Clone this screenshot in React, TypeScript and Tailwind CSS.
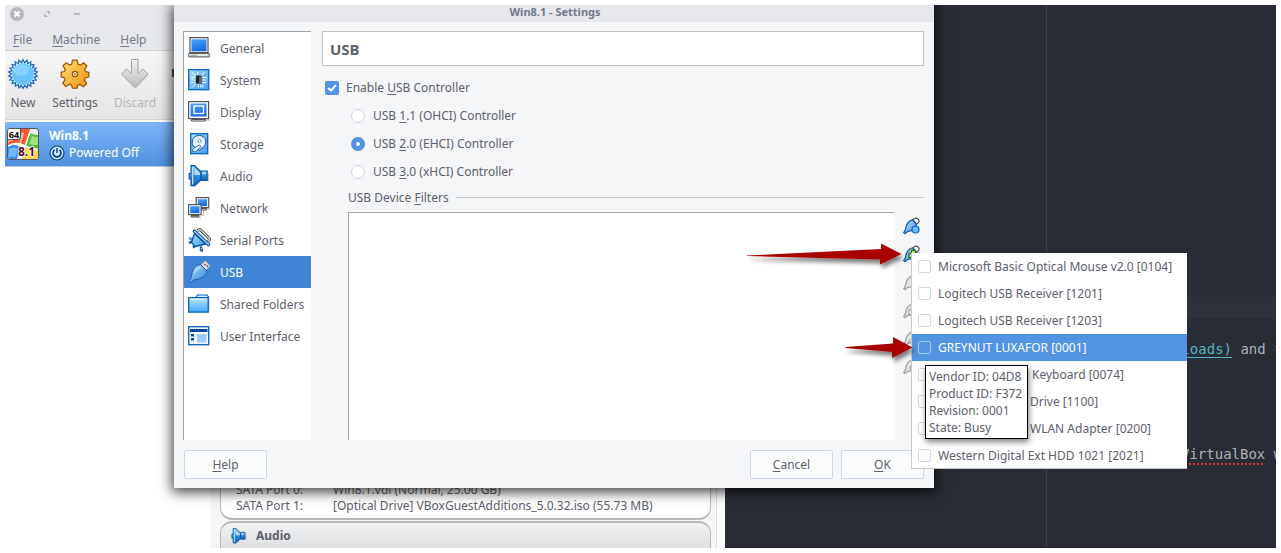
import type { ReactNode } from 'react';

const GENERAL = (
  <svg width="22" height="22" viewBox="0 0 22 22">
    <path d="M2 18h20v3H2z" fill="#bbb" opacity=".6" />
    <path d="M2 0.700h18v15H2z" fill="#fff" stroke="#555" strokeWidth="1.2" />
    <rect x="3.500" y="2.300" width="15" height="12" fill="url(#screen)" />
    <path d="M0.6 16.500h20.500v3.300H0.600z" fill="#e6e6e2" stroke="#666" />
    <path d="M3 18.200h6" stroke="#999" />
  </svg>
);
const SYSTEM = (
  <svg width="22" height="22" viewBox="0 0 22 22">
    <rect x="0.7" y="0.7" width="20" height="20" fill="url(#skyLight)" stroke="#0b62bd" strokeWidth="1.3" />
    <path d="M3 8.500h4M3 11h4M3 13.500h4M14.500 8.500h4M14.500 11h4M14.500 13.500h4M10.500 15.500v3M12.700 15.500v3M14.900 15.500v3M4 3.500l4 3.500M16.500 3l-3.500 4M9.500 3v3M4 18.500l4-4" stroke="#fff" strokeWidth="1" />
    <rect x="8" y="6.500" width="5.500" height="8" fill="#222" />
    <path d="M11 7.500h2.500v7H11z" fill="#666" />
  </svg>
);
const DISPLAY = (
  <svg width="22" height="22" viewBox="0 0 22 22">
    <path d="M2 18h20v2H2z" fill="#bbb" opacity=".6" />
    <rect x="0.6" y="0.600" width="20" height="17" fill="#fff" stroke="#555" strokeWidth="1.2" />
    <rect x="2.500" y="2.500" width="16" height="13" fill="url(#screen)" />
    <rect x="6" y="5" width="9.500" height="7.500" fill="none" stroke="#fff" strokeWidth="1.4" />
    <path d="M3.500 18.500h14v1.500h-14z" fill="#fff" stroke="#555" />
  </svg>
);
const STORAGE = (
  <svg width="22" height="22" viewBox="0 0 22 22">
    <rect x="2.700" y="0.700" width="17" height="20" fill="url(#skyLight)" stroke="#0b62bd" strokeWidth="1.3" />
    <path d="M5 13C3.500 10 4 5.500 7.500 3.500 11 1.500 15 2.500 17 5.500c1.800 3 .5 7-2 9L11.500 17z" fill="#e4f3ff" stroke="#0b4f9f" />
    <path d="M4.800 18.500c-.5-2 1-3 2.500-4l4-2.500 1.700 1.500-3 3c-1.500 1.500-3 3-5.200 2z" fill="#fff" stroke="#0b4f9f" strokeWidth=".9" />
    <circle cx="11.500" cy="8" r="1.500" fill="#fff" stroke="#2277c9" strokeWidth=".8" />
  </svg>
);
const AUDIO = (
  <svg width="22" height="22" viewBox="0 0 22 22">
    <path d="M4 21.500h3L13 16h8V8h-1v7h-7z" fill="#888" opacity=".5" />
    <path d="M1.200 8.500H3V.700H6.500L13.200 7v7.500L6.500 20.600H3V14H1.200z" fill="url(#speaker)" stroke="#0b55a8" strokeWidth="1.200" />
    <path d="M13.200 6h6v9.300h-6z" fill="url(#speaker)" stroke="#0b55a8" strokeWidth="1.200" />
    <path d="M4 2h1.300v17.500H4z" fill="#bfe2ff" />
    <path d="M6.500 3.200L12 8v2H6.500zM14 7.500h4v1.500h-4z" fill="#cfe9fd" opacity=".8" />
  </svg>
);
const NETWORK = (
  <svg width="22" height="22" viewBox="0 0 22 22">
    <path d="M9 12h13M3 20.500h10M14 18.500h1.500V9" stroke="#bbb" fill="none" />
    <rect x="8.200" y="0.600" width="12.500" height="10" fill="#fff" stroke="#555" strokeWidth="1.200" />
    <rect x="9.800" y="2.200" width="9.300" height="7" fill="url(#screen)" />
    <path d="M11 11.500h7.500v1.500H11z" fill="#fff" stroke="#555" />
    <rect x="0.600" y="7.600" width="12.500" height="10" fill="#fff" stroke="#555" strokeWidth="1.200" />
    <rect x="2.200" y="9.200" width="9.300" height="7" fill="url(#screen)" />
    <path d="M3 18.500h8v1.200H3z" fill="#fff" stroke="#555" />
  </svg>
);
const SERIAL = (
  <svg width="24" height="24" viewBox="0 0 24 24">
    <path d="M9.500 2.500L12 1.200l9.500 9.500-.8 3" fill="none" stroke="#444" strokeWidth="3" strokeLinejoin="round" />
    <path d="M10 2.500L12 1.200l9.500 9.500-.8 3" fill="none" stroke="#f4f4f4" strokeWidth="1.200" strokeLinejoin="round" />
    <path d="M1 10l4 1.500M1 15l4-2M13 18.500v3.500l2 .500M7 18l-2 1.500" stroke="#0b4f9f" strokeWidth="2.400" />
    <path d="M6.500 5.500L17.500 16 7 18.500 3.500 14.500z" fill="url(#skyLight)" stroke="#0b4f9f" strokeWidth="1.300" strokeLinejoin="round" />
    <path d="M6.500 3.200L20.500 16.500" stroke="#0b4f9f" strokeWidth="3.600" strokeLinecap="round" />
    <path d="M6.500 3.200L20.500 16.500" stroke="#a8d9ff" strokeWidth="1.400" strokeLinecap="round" />
    <path d="M1.200 10l2.500 1M13.200 20v2" stroke="#a8d9ff" strokeWidth=".9" />
  </svg>
);
const USB = (
  <svg width="24" height="24" viewBox="0 0 24 24">
    <path d="M12.500 5L17 .800Q17.500.500 18 1L22 5.500Q22.500 6 22 6.500L18 10.500z" fill="#dcdfe3" stroke="#7d858e" strokeWidth="1" />
    <path d="M16.300 4l1.300 1.300M18.800 5.500l1.300 1.300" stroke="#555" strokeWidth="1.500" />
    <path d="M12.500 4.500L18.700 10.800C19 15 15 18.500 8 19.500L5.500 20 2 22.700.800 21.500 3 18 3.700 15C4.500 9 8 4.800 12.500 4.500z" fill="url(#plugBody)" stroke="#1a62ad" strokeWidth="1" />
    <path d="M5.200 15C6 10 9 6.500 12 6l2 2C11 9 8 11.500 5.200 15z" fill="#c3e3fb" opacity=".6" />
  </svg>
);
const FOLDER = (
  <svg width="22" height="20" viewBox="0 0 22 20">
    <path d="M7 4.500L9.500 1h9.500l1.500 2v14" fill="#d4efff" stroke="#0b62bd" strokeWidth="1.200" />
    <path d="M.700 3.700h19.500v14.500H.700z" fill="url(#folder)" stroke="#0b62bd" strokeWidth="1.300" />
    <path d="M2 5.200h17" stroke="#e7f8ff" />
  </svg>
);
const INTERFACE = (
  <svg width="22" height="20" viewBox="0 0 22 20">
    <rect x=".700" y=".700" width="20" height="18" fill="#f5faff" stroke="#1467bd" strokeWidth="1.400" />
    <path d="M2 3h17.500v3H2z" fill="#0a489e" />
    <path d="M3 8h3v2.500H3zM3 12h3v2.500H3z" fill="#0a489e" />
    <path d="M9 8h9.500v8.500H9z" fill="#9ecbff" />
  </svg>
);

function Gradients() {
  return (
    <svg width="0" height="0" className="absolute" aria-hidden="true">
      <defs>
        <linearGradient id="screen" x1="0" y1="0" x2="0.3" y2="1"><stop stopColor="#4aa4ff" /><stop offset="1" stopColor="#1b6de0" /></linearGradient>
        <linearGradient id="skyLight" x1="0" y1="0" x2="1" y2="1"><stop stopColor="#a6dcff" /><stop offset="1" stopColor="#3c9cf0" /></linearGradient>
        <linearGradient id="speaker" x1="0" y1="0" x2="0" y2="1"><stop stopColor="#9ad4ff" /><stop offset=".55" stopColor="#2a86dc" /><stop offset="1" stopColor="#1760b8" /></linearGradient>
        <linearGradient id="plug" x1="0" y1="0" x2="1" y2="1"><stop stopColor="#cfe9fd" /><stop offset="1" stopColor="#3288d8" /></linearGradient>
        <linearGradient id="plugBody" x1="0" y1="0" x2="1" y2="1"><stop offset=".1" stopColor="#a5d2f7" /><stop offset=".9" stopColor="#3b8fdd" /></linearGradient>
        <linearGradient id="folder" x1="0" y1="0" x2="0" y2="1"><stop stopColor="#b8e5ff" /><stop offset="1" stopColor="#45aaf8" /></linearGradient>
        <linearGradient id="gold" x1="0" y1="0" x2="1" y2="1"><stop stopColor="#ffe071" /><stop offset="1" stopColor="#f29111" /></linearGradient>
        <linearGradient id="grey" x1="0" y1="0" x2="0" y2="1"><stop stopColor="#f2f2f2" /><stop offset="1" stopColor="#bdbdbd" /></linearGradient>
        <filter id="arrowShadow" x="-10%" y="-40%" width="125%" height="200%"><feDropShadow dx="2" dy="4" stdDeviation="2" floodOpacity=".5" /></filter>
      </defs>
    </svg>
  );
}

function points(count: number, outer: number, inner: number, c: number) {
  return Array.from({ length: count * 2 }, (_, i) => {
    const a = (i * Math.PI) / count - Math.PI / 2;
    const r = i % 2 ? inner : outer;
    return `${(c + r * Math.cos(a)).toFixed(2)},${(c + r * Math.sin(a)).toFixed(2)}`;
  }).join(' ');
}

const NEW_ICON = (
  <svg width="32" height="32" viewBox="0 0 32 32">
    <polygon points={points(22, 14.5, 11.4, 17)} fill="#999" opacity=".4" />
    <polygon points={points(22, 14.5, 11.4, 16)} fill="#d8f2ff" stroke="#0f60bb" strokeWidth="1.1" />
    <circle cx="16" cy="16" r="10.800" fill="#68c3ff" />
    <ellipse cx="14" cy="12" rx="8" ry="6" fill="#8fd4ff" opacity=".8" />
  </svg>
);
const GEAR_ICON = (
  <svg width="32" height="32" viewBox="0 0 32 32">
    <g transform="translate(.8 .3) scale(.95)">
      <path
        d="M13.300 2h5l.8 4.200 2.400 1 3.600-2.500 3.400 3.400-2.400 3.600 1 2.400 3.400.7v4.900l-3.700.8-1 2.400 2.500 3.600-3.500 3.400-3.500-2.400-2.400 1-.7 2.900h-5l-.8-3.200-2.400-1-3.600 2.500-3.300-3.500 2.400-3.500-1-2.400-3-.7v-5l3.300-.7 1-2.400L3.300 8.100l3.500-3.400 3.500 2.400 2.300-1z"
        fill="url(#gold)" stroke="#965309" strokeWidth="1.300" strokeLinejoin="round"
      />
      <circle cx="16" cy="16.500" r="2.800" fill="#fff3d0" stroke="#965309" strokeWidth="1.300" />
      <circle cx="16" cy="16.500" r="1" fill="#b87822" />
    </g>
  </svg>
);
const DISCARD_ICON = (
  <svg width="32" height="32" viewBox="0 0 32 32">
    <path d="M12.500 2h6v15l5-5 5 4.500L16 30 3 16.500 8 12l4.500 5z" fill="#999" opacity=".35" transform="translate(.8 1)" />
    <path d="M12.500 1.500h6.500v14l5-4.500L29 16 15.700 29.500 2.500 16 7.500 11l5 4.500z" fill="url(#grey)" stroke="#a4a4a4" />
    <path d="M13.500 2.500h4.500" stroke="#fff" />
  </svg>
);

function WinTile() {
  return (
    <div className="relative h-8 w-8 shrink-0 overflow-hidden rounded-[3px] border border-[#555] bg-[#e8eef0]">
      <svg width="30" height="30" viewBox="0 0 30 30" className="block">
        <path d="M0 9c5-2 9-3 13-2l2 8C10 14 5 14 0 17z" fill="#f9a98a" />
        <path d="M13 0h9l-5 17c-5-3-11-3-17 0v-3c4-3 8-4 12-4z" fill="#ef5a30" />
        <path d="M14 3l2 1-3 11h-2z" fill="#fff" opacity=".6" />
        <path d="M22 4c3 1.500 5 2 8 2v14c-5 0-10-1-12-3z" fill="#55b93c" />
        <path d="M24 7c2 1 4 1 6 1v8c-3 0-6 0-9-1z" fill="#a3e07d" />
        <path d="M0 18c5-3 9-2 12 0l-3 12H0z" fill="#2f8ff0" />
        <path d="M1 20c3-2 6-2 9 0L7 29c-2-2-5-2-7 0z" fill="#8cc8ff" opacity=".7" />
        <path d="M17 18c4 2 8 3 13 3v9H14z" fill="#ffd54c" />
        <path d="M0 17c6-4 11-3 16-1 5 3 9 4 14 4M22 3l-5 14-4 13" fill="none" stroke="#fff" strokeWidth="1.200" />
      </svg>
      <span className="absolute left-0 top-0 flex h-[11px] w-[13px] items-center justify-center rounded-br-sm border-b border-r border-[#555] bg-white text-[9px] font-bold leading-none text-black">64</span>
      <span className="absolute bottom-[1px] right-[3px] text-[12px] font-bold leading-[13px] text-[#5c0712] [text-shadow:1px_0_#fff,-1px_0_#fff,0_1px_#fff,0_-1px_#fff]">8.1</span>
    </div>
  );
}

function FilterIcon({ badge, muted }: { badge: string; muted?: boolean }) {
  const stroke = muted ? '#999' : '#0c55a8';
  return (
    <svg width="18" height="18" viewBox="0 0 18 18" className="block">
      <path d="M10 3Q11.500 1 13 1Q16 1.500 16.200 4.500L13.500 7.500z" fill="#f8f8f8" stroke={muted ? '#aaa' : '#444'} strokeWidth="1.100" />
      <path d="M9.500 2.800L13.500 7.500C13 12 9 14 5 14.300L2 16.500.700 15.800 2.500 12.500C3 8 5.500 4 9.500 2.800z" fill={muted ? '#e4e4e4' : 'url(#plug)'} stroke={stroke} strokeWidth="1.200" />
      {badge === 'dot' && <circle cx="12.500" cy="12.500" r="3.500" fill="#6db8f8" stroke="#0c62c2" strokeWidth="1.200" />}
      {badge === 'plus' && <path d="M8.500 5.500h4v3h3.500v4h-3.500v3h-4v-3H6v-4h2.500z" fill="#d8f9b5" stroke="#2f7a0b" strokeWidth="1.300" />}
      {badge === 'minus' && <rect x="6" y="8.500" width="8" height="5" fill="#eee" stroke="#999" />}
      {badge === 'up' && <path d="M5 13l6-6 6 6z" fill="#eee" stroke="#999" />}
      {badge === 'down' && <circle cx="10.500" cy="11" r="3.500" fill="#eee" stroke="#999" />}
    </svg>
  );
}

function U({ children }: { children: ReactNode }) {
  return <span className="underline decoration-1 underline-offset-[2px]">{children}</span>;
}

function ToolButton({ icon, label, width, muted }: { icon: ReactNode; label: string; width: string; muted?: boolean }) {
  return (
    <div className={`flex flex-col items-center ${width}`}>
      {icon}
      <span className={`mt-[3px] leading-[20px] ${muted ? 'text-[#b4b7bc]' : 'text-[#5c616c]'}`}>{label}</span>
    </div>
  );
}

function ManagerWindow() {
  return (
    <div className="absolute left-0 top-0 flex h-[543px] w-[720px] flex-col bg-white">
      <div className="h-[45px] bg-[#e7e8eb] text-[#70788c]">
        <div className="flex h-[18px] items-center pl-[5px]">
          <svg width="90" height="18" viewBox="0 0 90 18">
            <circle cx="7" cy="9" r="7" fill="#b6b8be" />
            <path d="M4.500 6.500l5 5m0-5l-5 5" stroke="#fff" strokeWidth="2" />
            <path d="M36 6h4v4zM34 8v4h4z" fill="#b6b8be" />
            <path d="M64 8h6v2h-6z" fill="#b6b8be" />
          </svg>
        </div>
        <div className="flex h-[33px] gap-5 pl-[8px] leading-[34px]">
          <span><U>F</U>ile</span>
          <span><U>M</U>achine</span>
          <span><U>H</U>elp</span>
        </div>
      </div>
      <div className="flex h-[70px] border-b border-t border-[#d2d3d6] bg-linear-to-b from-[#f6f6f7] to-[#e5e5e5] pt-[7px]">
        <ToolButton icon={NEW_ICON} label="New" width="w-[36px]" />
        <ToolButton icon={GEAR_ICON} label="Settings" width="w-[68px]" />
        <ToolButton icon={DISCARD_ICON} label="Discard" width="w-[52px]" muted />
        <div className="ml-[11px] mt-[11px] h-2 w-2 bg-[#396229]" />
      </div>
      <div className="flex min-h-0 flex-1">
        <div className="w-[205px] pt-[2px]">
          <div className="flex h-[45px] items-center gap-[10px] border-b border-[#b9cde5] bg-linear-to-b from-[#7db6fb] to-[#4f90dd] pl-[2px] text-white">
            <WinTile />
            <div>
              <div className="font-bold leading-[17px]">Win8.1</div>
              <div className="flex items-center gap-1 leading-[17px]">
                <svg width="16" height="16" viewBox="0 0 16 16">
                  <circle cx="8" cy="8" r="7" fill="#cbe8ff" stroke="#083f86" strokeWidth="1.200" />
                  <path d="M5.500 4.800a4 4 0 1 0 5 0" fill="none" stroke="#09408c" strokeWidth="1.700" />
                  <path d="M8 3v5" stroke="#09408c" strokeWidth="1.500" />
                </svg>
                Powered Off
              </div>
            </div>
          </div>
        </div>
        <div className="flex flex-1 flex-col justify-end bg-[#f5f6f7]">
          <div className="flex h-[200px] bg-[#f5f6f7]">
            <div className="flex w-[507px] flex-col gap-[1px] border-r border-[#dadbdd] pl-[10px]">
              <div className="flex h-[172px] w-[491px] flex-col justify-end rounded-[12px] border border-b-2 border-[#b9b9b9] bg-white pb-[4px] pl-[15px] leading-[16px]">
                <div className="flex"><span className="w-[97px]">SATA Port 0:</span><span>Win8.1.vdi (Normal, 25.00 GB)</span></div>
                <div className="flex"><span className="w-[97px]">SATA Port 1:</span><span>[Optical Drive] VBoxGuestAdditions_5.0.32.iso (55.73 MB)</span></div>
              </div>
              <div className="flex h-[27px] w-[491px] items-center gap-[9px] rounded-t-[12px] border border-b-0 border-t-2 border-[#b9b9b9] bg-linear-to-b from-[#f1f2f3] to-[#dedfe0] pl-[10px] font-bold">
                <span className="h-4 w-4 [&>svg]:h-4 [&>svg]:w-4">{AUDIO}</span>
                <span>Audio</span>
              </div>
            </div>
            <div className="flex-1 bg-[#fbfbfc]" />
          </div>
        </div>
      </div>
    </div>
  );
}

function Editor() {
  return (
    <div className="absolute left-[720px] top-0 flex h-[543px] w-[551px] overflow-hidden border-b border-[#2e1f38] bg-[#282c34] font-['DejaVu_Sans_Mono',monospace] text-[14px] leading-[21px] text-[#abb2bf]">
      <div className="w-full whitespace-pre pt-[292px]">
        <div className="h-[21px] bg-[#2c313a]" />
        <div className="h-[21px]" />
        <div className="h-[21px] pl-[448px]"><span className="text-[#56b6c2] underline underline-offset-[3px]">nloads)</span> and t</div>
        <div className="h-[84px]" />
        <div className="h-[21px] pl-[456px]"><span className="underline decoration-[#e0353b] decoration-dotted decoration-2 underline-offset-[4px]">VirtualBox</span> w</div>
      </div>
      <div className="absolute left-[321px] top-0 h-full w-px bg-[#3a3f48]" />
    </div>
  );
}

const CATEGORIES: { label: string; icon: ReactNode; active?: boolean }[] = [
  { label: 'General', icon: GENERAL },
  { label: 'System', icon: SYSTEM },
  { label: 'Display', icon: DISPLAY },
  { label: 'Storage', icon: STORAGE },
  { label: 'Audio', icon: AUDIO },
  { label: 'Network', icon: NETWORK },
  { label: 'Serial Ports', icon: SERIAL },
  { label: 'USB', icon: USB, active: true },
  { label: 'Shared Folders', icon: FOLDER },
  { label: 'User Interface', icon: INTERFACE },
];

function Radio({ checked, children }: { checked?: boolean; children: ReactNode }) {
  return (
    <div className="flex h-7 items-center gap-2">
      <span className={`flex h-[14px] w-[14px] items-center justify-center rounded-full ${checked ? 'bg-[#5294e2]' : 'border border-[#cfd6e6] bg-white'}`}>
        {checked && <span className="h-1 w-1 rounded-full bg-white" />}
      </span>
      <span>{children}</span>
    </div>
  );
}

function Button({ children }: { children: ReactNode }) {
  return <div className="flex h-[29px] w-[83px] items-center justify-center rounded-[2px] border border-[#cfd6e6] bg-[#fbfdfd]">{children}</div>;
}

function SettingsDialog() {
  return (
    <div className="absolute left-[169px] top-0 flex h-[483px] w-[760px] flex-col bg-[#f5f6f8] shadow-[0_2px_12px_2px_rgba(0,0,0,0.75)]">
      <div className="h-[17px] bg-[#e7e8eb] pl-[2px] text-center text-[11px] font-bold leading-[14px] text-[#70788c]">Win8.1 - Settings</div>
      <div className="flex h-[418px] pl-[9px] pt-[9px]">
        <div className="w-[128px] border-l border-t border-[#a0a5ac] bg-white">
          {CATEGORIES.map((c) => (
            <div key={c.label} className={`flex h-8 items-center pl-1 ${c.active ? 'bg-[#4084d6] text-white' : ''}`}>
              <span className="flex w-8 items-center">{c.icon}</span>
              <span className="pt-[2px]">{c.label}</span>
            </div>
          ))}
        </div>
        <div className="ml-[11px] flex w-[602px] flex-col">
          <div className="flex h-[35px] items-center border border-[#c0c1c3] bg-white pl-[7px] pt-[2px] text-[15px] font-bold">USB</div>
          <div className="mt-[8px] flex h-7 items-center gap-[7px] pl-[3px]">
            <span className="flex h-[14px] w-[14px] items-center justify-center rounded-[2px] bg-[#5294e2]">
              <svg width="10" height="10" viewBox="0 0 10 10"><path d="M1 5l3 2.500L9 2" fill="none" stroke="#fff" strokeWidth="2" /></svg>
            </span>
            <span>Enable <U>U</U>SB Controller</span>
          </div>
          <div className="pl-[29px]">
            <Radio>USB <U>1</U>.1 (OHCI) Controller</Radio>
            <Radio checked>USB <U>2</U>.0 (EHCI) Controller</Radio>
            <Radio>USB <U>3</U>.0 (xHCI) Controller</Radio>
          </div>
          <div className="flex h-[26px] items-center gap-[7px] pl-[26px] pb-[3px]">
            <span>USB Device <U>F</U>ilters</span>
            <span className="h-px flex-1 bg-[#c6c7ca]" />
          </div>
          <div className="flex flex-1 pl-[26px]">
            <div className="w-[546px] border-l border-t border-[#a0a5ac] bg-white" />
            <div className="flex flex-col gap-[10px] pl-[9px] pt-[5px]">
              <FilterIcon badge="dot" />
              <FilterIcon badge="plus" />
              <FilterIcon badge="" muted />
              <FilterIcon badge="minus" muted />
              <FilterIcon badge="up" muted />
              <FilterIcon badge="down" muted />
            </div>
          </div>
        </div>
      </div>
      <div className="flex pl-[10px] pt-[10px]">
        <Button><span><U>H</U>elp</span></Button>
        <div className="ml-[483px] flex gap-2">
          <Button><span><U>C</U>ancel</span></Button>
          <Button><span><U>O</U>K</span></Button>
        </div>
      </div>
    </div>
  );
}

const DEVICES: { label: string; offset?: string; active?: boolean }[] = [
  { label: 'Microsoft Basic Optical Mouse v2.0 [0104]' },
  { label: 'Logitech USB Receiver [1201]' },
  { label: 'Logitech USB Receiver [1203]' },
  { label: 'GREYNUT LUXAFOR [0001]', active: true },
  { label: 'Keyboard [0074]', offset: 'ml-[94px]' },
  { label: 'Drive [1100]', offset: 'ml-[92px]' },
  { label: 'WLAN Adapter [0200]', offset: 'ml-[92px]' },
  { label: 'Western Digital Ext HDD 1021 [2021]' },
];

function DeviceMenu() {
  return (
    <div className="absolute left-[907px] top-[248px] h-[216px] w-[275px] border-b border-[#c4c6c9] bg-white shadow-[-1px_0_0_#c9cacc]">
      {DEVICES.map((d) => (
        <div key={d.label} className={`flex h-[27px] items-center pl-[6px] ${d.active ? 'bg-[#5294e2] text-white' : ''}`}>
          <span className={`mr-[7px] h-[13px] w-[13px] rounded-[2px] border ${d.active ? 'border-[#a9caf1]' : 'border-[#cfd6e6]'}`} />
          <span className={`whitespace-nowrap ${d.offset ?? ''}`}>{d.label}</span>
        </div>
      ))}
    </div>
  );
}

function Tooltip() {
  return (
    <div className="absolute left-[920px] top-[360px] h-[74px] w-[103px] border border-black bg-white pl-[3px] pt-[2px] leading-[17px] shadow-[1px_3px_6px_rgba(0,0,0,0.5)]">
      <div>Vendor ID: 04D8</div>
      <div>Product ID: F372</div>
      <div>Revision: 0001</div>
      <div>State: Busy</div>
    </div>
  );
}

export default function App() {
  return (
    <div className="h-[553px] w-[1281px] overflow-hidden bg-white p-[5px]">
      <div className="relative h-[543px] w-[1271px] overflow-hidden font-['Noto_Sans',sans-serif] text-[12px] text-[#5c616c]">
        <Gradients />
        <ManagerWindow />
        <Editor />
        <SettingsDialog />
        <DeviceMenu />
        <Tooltip />
        <svg className="absolute left-[735px] top-[230px]" width="180" height="130" viewBox="740 235 180 130">
          <g fill="#a90004" filter="url(#arrowShadow)">
            <path d="M747 255.500L881 249V243.500L901.500 254 880 264.500V259.500L747 256z" />
            <path d="M845.500 347L893 343.500V337L912.500 347.500 892 358V352L845.500 348z" />
          </g>
        </svg>
      </div>
    </div>
  );
}
